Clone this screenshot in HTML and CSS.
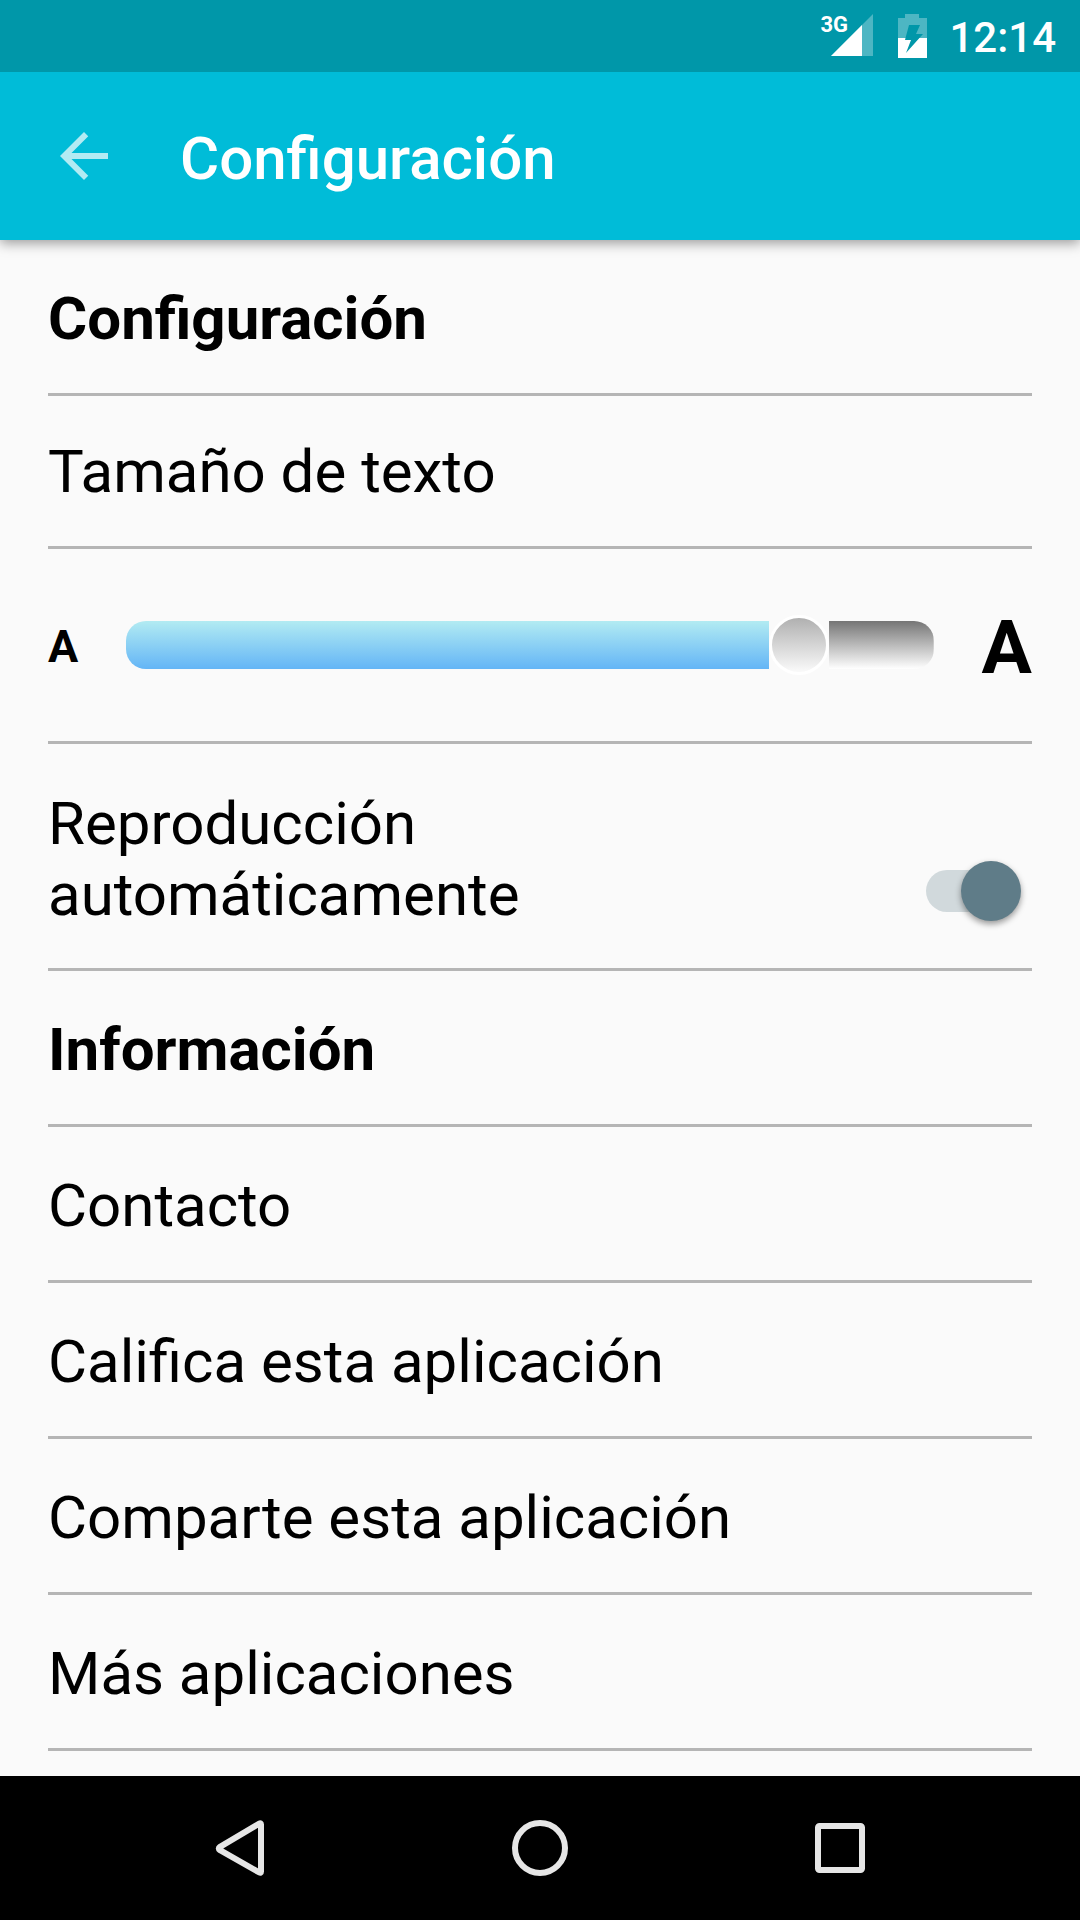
FILE: index.html
```html
<!DOCTYPE html>
<html lang="es">
<head>
  <meta charset="utf-8">
  <meta name="viewport" content="width=device-width, initial-scale=1">
  <title>Configuración</title>
  <link rel="stylesheet" href="styles.css">
</head>
<body class="screen">
  <div class="status-bar">
    <div class="signal">
      <span class="signal-type">3G</span>
      <svg class="signal-icon" viewBox="0 0 42 42" aria-hidden="true">
        <path d="M42 0V42H0Z" fill="#fff" fill-opacity=".3"/>
        <path d="M31 11V42H0Z" fill="#fff"/>
      </svg>
    </div>
    <svg class="battery-icon" viewBox="0 0 29 44" aria-hidden="true">
      <path fill="#fff" fill-opacity=".3" d="M7 0H21V4H29V24H21.400L25 20H18L22 11H11L7.500 24H0V4H7Z"/>
      <path fill="#fff" d="M0 24H7.500L7 26H13L8 39L21.400 24H29V44H0Z"/>
    </svg>
    <time class="clock">12:14</time>
  </div>

  <header class="app-bar">
    <button class="back-button" type="button" aria-label="Atrás">
      <svg class="back-icon" viewBox="0 0 24 24" aria-hidden="true">
        <path fill="#fff" fill-opacity=".7" d="M20 11H7.830l5.590-5.590L12 4l-8 8 8 8 1.410-1.410L7.830 13H20z"/>
      </svg>
    </button>
    <h1 class="app-title">Configuración</h1>
  </header>

  <main class="settings">
    <h2 class="row heading">Configuración</h2>
    <div class="row row-compact"><label for="text-size">Tamaño de texto</label></div>
    <div class="row-slider">
      <span class="letter letter-small">A</span>
      <input class="slider" id="text-size" type="range" min="0" max="100" value="86" style="--value: 86">
      <span class="letter letter-large">A</span>
    </div>
    <div class="row row-switch">
      <label for="autoplay">Reproducción<br>automáticamente</label>
      <input class="switch" id="autoplay" type="checkbox" role="switch" checked>
    </div>
    <h2 class="row heading">Información</h2>
    <a class="row" href="#contacto">Contacto</a>
    <a class="row" href="#califica">Califica esta aplicación</a>
    <a class="row" href="#comparte">Comparte esta aplicación</a>
    <a class="row" href="#mas">Más aplicaciones</a>
  </main>

  <nav class="nav-bar" aria-label="Sistema">
    <button class="nav-button" type="button" aria-label="Volver">
      <svg class="nav-icon" viewBox="0 0 60 60" aria-hidden="true"><path d="M51 6.500V53.500Q51 55.500 49.300 54.500L10 32.200Q7.500 30.500 10 28.800L49.300 5.500Q51 4.500 51 6.500Z"/></svg>
    </button>
    <button class="nav-button" type="button" aria-label="Inicio">
      <svg class="nav-icon" viewBox="0 0 60 60" aria-hidden="true"><circle cx="30" cy="30" r="25"/></svg>
    </button>
    <button class="nav-button" type="button" aria-label="Recientes">
      <svg class="nav-icon" viewBox="0 0 60 60" aria-hidden="true"><rect x="8" y="8" width="44" height="44" rx="1.500"/></svg>
    </button>
  </nav>
</body>
</html>
```

FILE: styles.css
```css
* {
  box-sizing: border-box;
}

.screen {
  display: flex;
  flex-direction: column;
  min-height: 100vh;
  margin: 0;
  background: #fafafa;
  color: #000;
  font-family: Roboto, "Liberation Sans", sans-serif;
  font-size: 60px;
  line-height: 70px;
}

button {
  display: flex;
  align-items: center;
  justify-content: center;
  padding: 0;
  border: 0;
  background: none;
}

/* Status bar */
.status-bar {
  position: relative;
  z-index: 1;
  display: flex;
  align-items: center;
  justify-content: flex-end;
  height: 72px;
  padding: 0 24px;
  background: #0097a9;
  color: #fff;
}

.signal {
  position: relative;
  width: 54px;
  height: 44px;
  margin-right: 25px;
}

.signal-type {
  position: absolute;
  left: 1px;
  top: 0;
  font-size: 22px;
  font-weight: 700;
  line-height: 22px;
}

.signal-icon {
  display: block;
  width: 42px;
  height: 42px;
  margin-left: 12px;
}

.battery-icon {
  width: 29px;
  height: 44px;
  margin-right: 22px;
}

.clock {
  padding-top: 4px;
  font-size: 42px;
  font-weight: 500;
  line-height: 48px;
}

/* App bar */
.app-bar {
  display: flex;
  align-items: center;
  gap: 60px;
  height: 168px;
  padding: 0 48px;
  background: #00bcd8;
  box-shadow: 0 3px 12px rgba(0, 0, 0, .4);
  color: #fff;
}

.back-icon {
  display: block;
  width: 72px;
  height: 72px;
}

.app-title {
  margin: 0;
  padding-top: 6px;
  font-size: 60px;
  font-weight: 500;
}

/* Settings list */
.settings {
  flex: 1;
  padding: 0 48px 25px;
}

.row {
  display: block;
  margin: 0;
  padding: 44px 0 39px;
  border-bottom: 3px solid #b5b5b5;
  color: inherit;
  text-decoration: none;
}

.row-compact {
  padding-top: 41px;
}

.heading {
  font-size: 60px;
  font-weight: 700;
}

.row-slider {
  display: flex;
  align-items: center;
  gap: 48px;
  height: 195px;
  border-bottom: 3px solid #b5b5b5;
}

.letter {
  padding-top: 4px;
  font-weight: 700;
}

.letter-small {
  font-size: 45px;
}

.letter-large {
  font-size: 75px;
}

.slider {
  flex: 1;
  min-width: 0;
  height: 60px;
  margin: 0;
  appearance: none;
  background: none;
}

.slider::-webkit-slider-runnable-track {
  height: 48px;
  border-radius: 20px;
  background:
    linear-gradient(#b2ebf2, #64b5f6) left / calc((100% - 60px) * var(--value) / 100) 100% no-repeat,
    linear-gradient(#757575, #fff) right / calc((100% - 60px) * (100 - var(--value)) / 100) 100% no-repeat;
}

.slider::-webkit-slider-thumb {
  width: 60px;
  height: 60px;
  margin-top: -6px;
  appearance: none;
  border: 3px solid #fff;
  border-radius: 50%;
  background: linear-gradient(#b0b0b0, #fafafa);
}

.row-switch {
  display: flex;
  align-items: flex-end;
  justify-content: space-between;
  padding-bottom: 38px;
  line-height: 71px;
}

.switch {
  position: relative;
  width: 106px;
  height: 60px;
  margin: 0 0 9px;
  appearance: none;
}

.switch::before {
  content: "";
  position: absolute;
  left: 0;
  top: 9px;
  width: 84px;
  height: 42px;
  border-radius: 21px;
  background: #d1d9dc;
}

.switch::after {
  content: "";
  position: absolute;
  right: 11px;
  top: 0;
  width: 60px;
  height: 60px;
  border-radius: 50%;
  background: #5f7c88;
  box-shadow: 0 3px 6px rgba(0, 0, 0, .4);
}

/* Navigation bar */
.nav-bar {
  display: grid;
  grid-template-columns: repeat(3, 1fr);
  height: 144px;
  padding: 0 90px;
  background: #000;
}

.nav-icon {
  width: 60px;
  height: 60px;
  fill: none;
  stroke: #e6e6e6;
  stroke-width: 6;
  stroke-linejoin: round;
}
```
